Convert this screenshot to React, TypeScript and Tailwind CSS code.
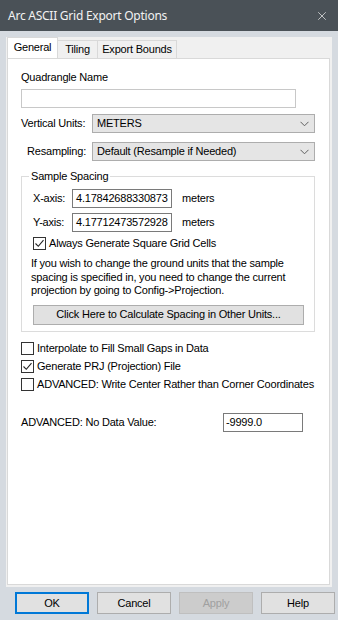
import { X } from "lucide-react";

const ui = { fontFamily: '"Liberation Sans", Arial, sans-serif', letterSpacing: "-0.2px" };

const Check = ({ checked }: { checked?: boolean }) => (
  <span className="w-[13px] h-[13px] border border-[#333333] bg-white flex items-center justify-center shrink-0">
    {checked && (
      <svg width="11" height="11" viewBox="0 0 11 11">
        <path d="M1.5 5.5 L4.3 8.3 L9.5 2.2" fill="none" stroke="#222" strokeWidth="1.1" />
      </svg>
    )}
  </span>
);

const Chevron = () => (
  <svg width="9" height="6" viewBox="0 0 9 6" className="mr-[5px]">
    <path d="M0.5 0.8 L4.5 4.8 L8.5 0.8" fill="none" stroke="#606060" strokeWidth="1" />
  </svg>
);

const Select = ({ value }: { value: string }) => (
  <div className="flex-1 h-[19px] bg-[#e5e5e5] border border-[#adadad] flex items-center justify-between pl-[4px]">
    <span>{value}</span>
    <Chevron />
  </div>
);

const DlgButton = ({ label, kind }: { label: string; kind?: "default" | "disabled" }) => {
  let cls = "bg-[#e1e1e1] border border-[#adadad] text-black";
  if (kind === "default") cls = "bg-[#e1e1e1] border-2 border-[#0078d7] text-black";
  if (kind === "disabled") cls = "bg-[#cccccc] border border-[#bfbfbf] text-[#a0a0a0]";
  return <div className={`w-[74px] h-[22px] flex items-center justify-center ${cls}`}>{label}</div>;
};

const CheckRow = ({ label, checked, cls }: { label: string; checked?: boolean; cls: string }) => (
  <div className={`${cls} flex items-center gap-[3px] h-[13px] whitespace-nowrap`}>
    <Check checked={checked} />
    <span>{label}</span>
  </div>
);

export default function App() {
  return (
    <div className="w-[338px] h-[620px] bg-[#d5dae0] flex flex-col text-[11px] text-black" style={ui}>
      {/* title bar */}
      <div className="h-[31px] bg-[#4a5157] flex items-center justify-between pl-[8px] pr-[9px] shrink-0">
        <span
          className="text-[#f2f2f2] text-[12px]"
          style={{ fontFamily: '"Noto Sans", sans-serif', letterSpacing: "-0.25px" }}
        >
          Arc ASCII Grid Export Options
        </span>
        <X size={14} strokeWidth={1.2} color="#f2f2f2" />
      </div>

      {/* property sheet */}
      <div className="mt-[6px] ml-[6px] w-[326px] h-[550px] bg-[#f0f0f0] pl-[1px] pr-[2px] pb-[2px] flex flex-col">
        <div className="flex items-end h-[21px] relative z-10 whitespace-nowrap">
          <div className="w-[51px] h-[21px] bg-white border border-b-0 border-[#d9d9d9] flex items-center justify-center pb-[2px]">
            General
          </div>
          <div className="w-[40px] h-[18px] border border-l-0 border-b-0 border-[#d9d9d9] flex items-center justify-center">
            Tiling
          </div>
          <div className="w-[79px] h-[18px] border border-l-0 border-b-0 border-[#d9d9d9] flex items-center justify-center">
            Export Bounds
          </div>
        </div>

        <div className="flex-1 bg-white border border-[#d9d9d9] pl-[13px] pr-[14px] flex flex-col whitespace-nowrap">
          <div className="mt-[11px] leading-[14px]">Quadrangle Name</div>
          <div className="mt-[5px] w-[275px] h-[19px] border border-[#c8c8c8]" />

          <div className="mt-[6px] flex items-center">
            <span className="w-[71px]">Vertical Units:</span>
            <Select value="METERS" />
          </div>
          <div className="mt-[9px] flex items-center">
            <span className="w-[71px] text-right pr-[6px]">Resampling:</span>
            <Select value="Default (Resample if Needed)" />
          </div>

          {/* group box */}
          <div className="relative border border-[#dcdcdc] mt-[15px] h-[156px] px-[11px] pt-[12px]">
            <span className="absolute -top-[8px] left-[7px] bg-white px-[2px] leading-[14px]">Sample Spacing</span>
            <div className="flex items-center">
              <span className="w-[39px]">X-axis:</span>
              <div className="w-[100px] h-[19px] border border-[#7a7a7a] flex items-center pl-[3px]">
                4.17842688330873
              </div>
              <span className="ml-[10px]">meters</span>
            </div>
            <div className="mt-[5px] flex items-center">
              <span className="w-[39px]">Y-axis:</span>
              <div className="w-[100px] h-[19px] border border-[#7a7a7a] flex items-center pl-[3px]">
                4.17712473572928
              </div>
              <span className="ml-[10px]">meters</span>
            </div>
            <CheckRow cls="mt-[5px]" label="Always Generate Square Grid Cells" checked />
            <div className="mt-[7px] -ml-[2px] leading-[13.5px]">
              If you wish to change the ground units that the sample
              <br />
              spacing is specified in, you need to change the current
              <br />
              projection by going to Config-&gt;Projection.
            </div>
            <div className="mt-[7px] w-[271px] h-[20px] bg-[#e1e1e1] border border-[#adadad] flex items-center justify-center">
              Click Here to Calculate Spacing in Other Units...
            </div>
          </div>

          <CheckRow cls="mt-[10px]" label="Interpolate to Fill Small Gaps in Data" />
          <CheckRow cls="mt-[5px]" label="Generate PRJ (Projection) File" checked />
          <CheckRow cls="mt-[5px]" label="ADVANCED: Write Center Rather than Corner Coordinates" />

          <div className="mt-[22px] flex items-center">
            <span className="w-[202px]">ADVANCED: No Data Value:</span>
            <div className="w-[80px] h-[19px] border border-[#7a7a7a] flex items-center pl-[2px]">-9999.0</div>
          </div>
        </div>
      </div>

      {/* buttons */}
      <div className="mt-[5px] ml-[15px] flex gap-[8px]">
        <DlgButton label="OK" kind="default" />
        <DlgButton label="Cancel" />
        <DlgButton label="Apply" kind="disabled" />
        <DlgButton label="Help" />
      </div>
    </div>
  );
}
